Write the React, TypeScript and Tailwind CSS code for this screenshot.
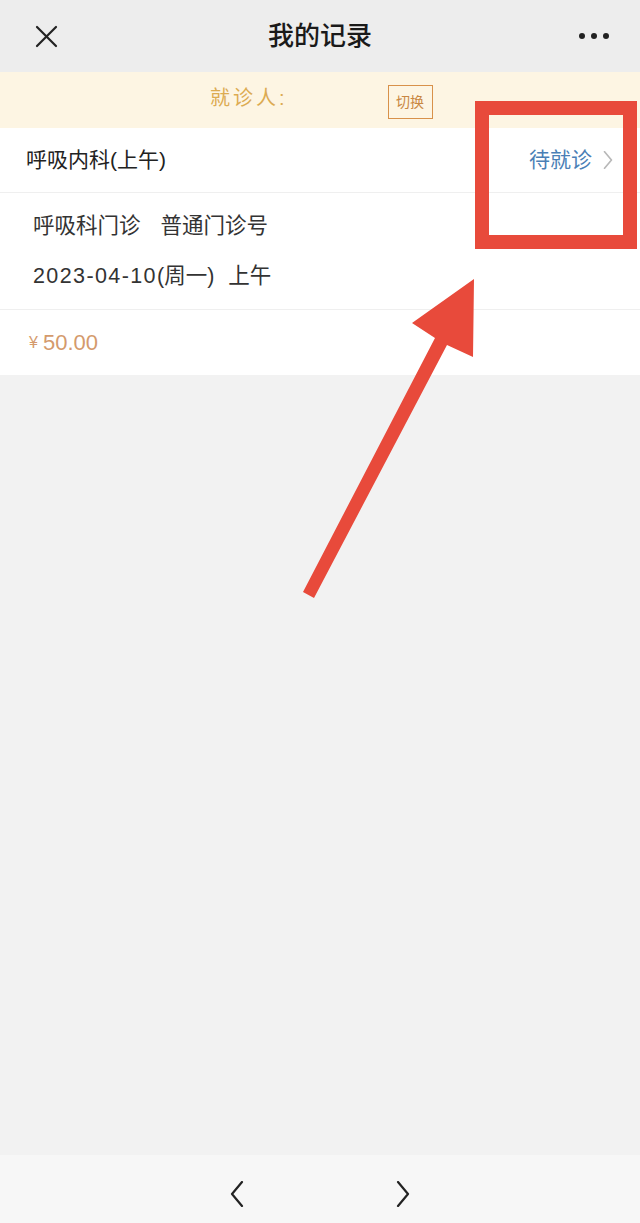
import React from 'react';

const font = 'font-["Liberation_Sans","Noto_Sans_CJK_SC",sans-serif]';

/** 红色标注：方框 + 箭头，覆盖在页面之上 */
const Annotation: React.FC = () => (
  <svg
    className="absolute inset-0 pointer-events-none"
    width={640}
    height={1223}
    viewBox="0 0 640 1223"
  >
    <rect x={482} y={108} width={148} height={134} fill="none" stroke="#e84a3b" strokeWidth={14} />
    <polygon
      points="303,592 314,598 447,345 473,357 474,279 412,323 435,338"
      fill="#e84a3b"
    />
  </svg>
);

const Chevron: React.FC<{ dir: 'left' | 'right'; className?: string; color?: string; w?: number }> = ({
  dir,
  className,
  color = '#222',
  w = 2.2,
}) => (
  <svg className={className} viewBox="0 0 16 26" fill="none" stroke={color} strokeWidth={w} strokeLinecap="round" strokeLinejoin="round">
    {dir === 'left' ? <polyline points="13,1 3,13 13,25" /> : <polyline points="3,1 13,13 3,25" />}
  </svg>
);

export default function App() {
  return (
    <div className={`relative w-[640px] h-[1223px] bg-[#f2f2f2] flex flex-col overflow-hidden ${font}`}>
      {/* 顶部导航 */}
      <div className="h-[72px] bg-[#ededed] grid grid-cols-[110px_1fr_110px] items-center">
        <div className="pl-[35px]">
          <svg width={23} height={23} viewBox="0 0 23 23" stroke="#222" strokeWidth={2.2} strokeLinecap="round">
            <line x1={2} y1={2} x2={21} y2={21} />
            <line x1={21} y1={2} x2={2} y2={21} />
          </svg>
        </div>
        <div className="text-center text-[26px] font-medium text-[#1a1a1a] leading-none">我的记录</div>
        <div className="flex justify-end pr-[31px] gap-[6px]">
          <span className="w-[6px] h-[6px] rounded-full bg-[#222]" />
          <span className="w-[6px] h-[6px] rounded-full bg-[#222]" />
          <span className="w-[6px] h-[6px] rounded-full bg-[#222]" />
        </div>
      </div>

      {/* 就诊人 */}
      <div className="h-[56px] bg-[#fdf5e3] flex items-center pl-[210px]">
        <span className="text-[20px] tracking-[3px] text-[#dcab52] leading-none -mt-[4px]">就诊人:</span>
        <span className="ml-[100px] mt-[4px] w-[45px] h-[34px] border border-[#d8914a] text-[#c98742] text-[14px] flex items-center justify-center leading-none">
          切换
        </span>
      </div>

      {/* 记录卡片 */}
      <div className="bg-white">
        <div className="h-[65px] flex items-center justify-between pl-[26px] pr-[26px] border-b border-[#efefef]">
          <span className="text-[21px] text-[#222]">呼吸内科(上午)</span>
          <div className="flex items-center gap-[10px]">
            <span className="text-[21px] text-[#4a7fb6]">待就诊</span>
            <Chevron dir="right" className="w-[12px] h-[18px]" color="#b8b8b8" w={2.4} />
          </div>
        </div>
        <div className="pl-[33px] pt-[18px] pb-[18px] flex flex-col gap-[20px] border-b border-[#efefef] text-[21.5px] text-[#333] leading-[30px]">
          <div>
            呼吸科门诊<span className="ml-[20px]">普通门诊号</span>
          </div>
          <div>
            <span className="tracking-[1.4px]">2023-04-10</span>(周一)<span className="ml-[14px]">上午</span>
          </div>
        </div>
        <div className="h-[65px] flex items-center pl-[29px] text-[22px] text-[#d49a6c]">
          <span className="text-[16px] mr-[5px]">¥</span>50.00
        </div>
      </div>

      <div className="flex-1" />

      {/* 底部前进后退 */}
      <div className="h-[68px] bg-[#f7f7f7] flex items-center justify-center gap-[150px] pt-[10px]">
        <Chevron dir="left" className="w-[16px] h-[26px]" />
        <Chevron dir="right" className="w-[16px] h-[26px]" />
      </div>

      <Annotation />
    </div>
  );
}
